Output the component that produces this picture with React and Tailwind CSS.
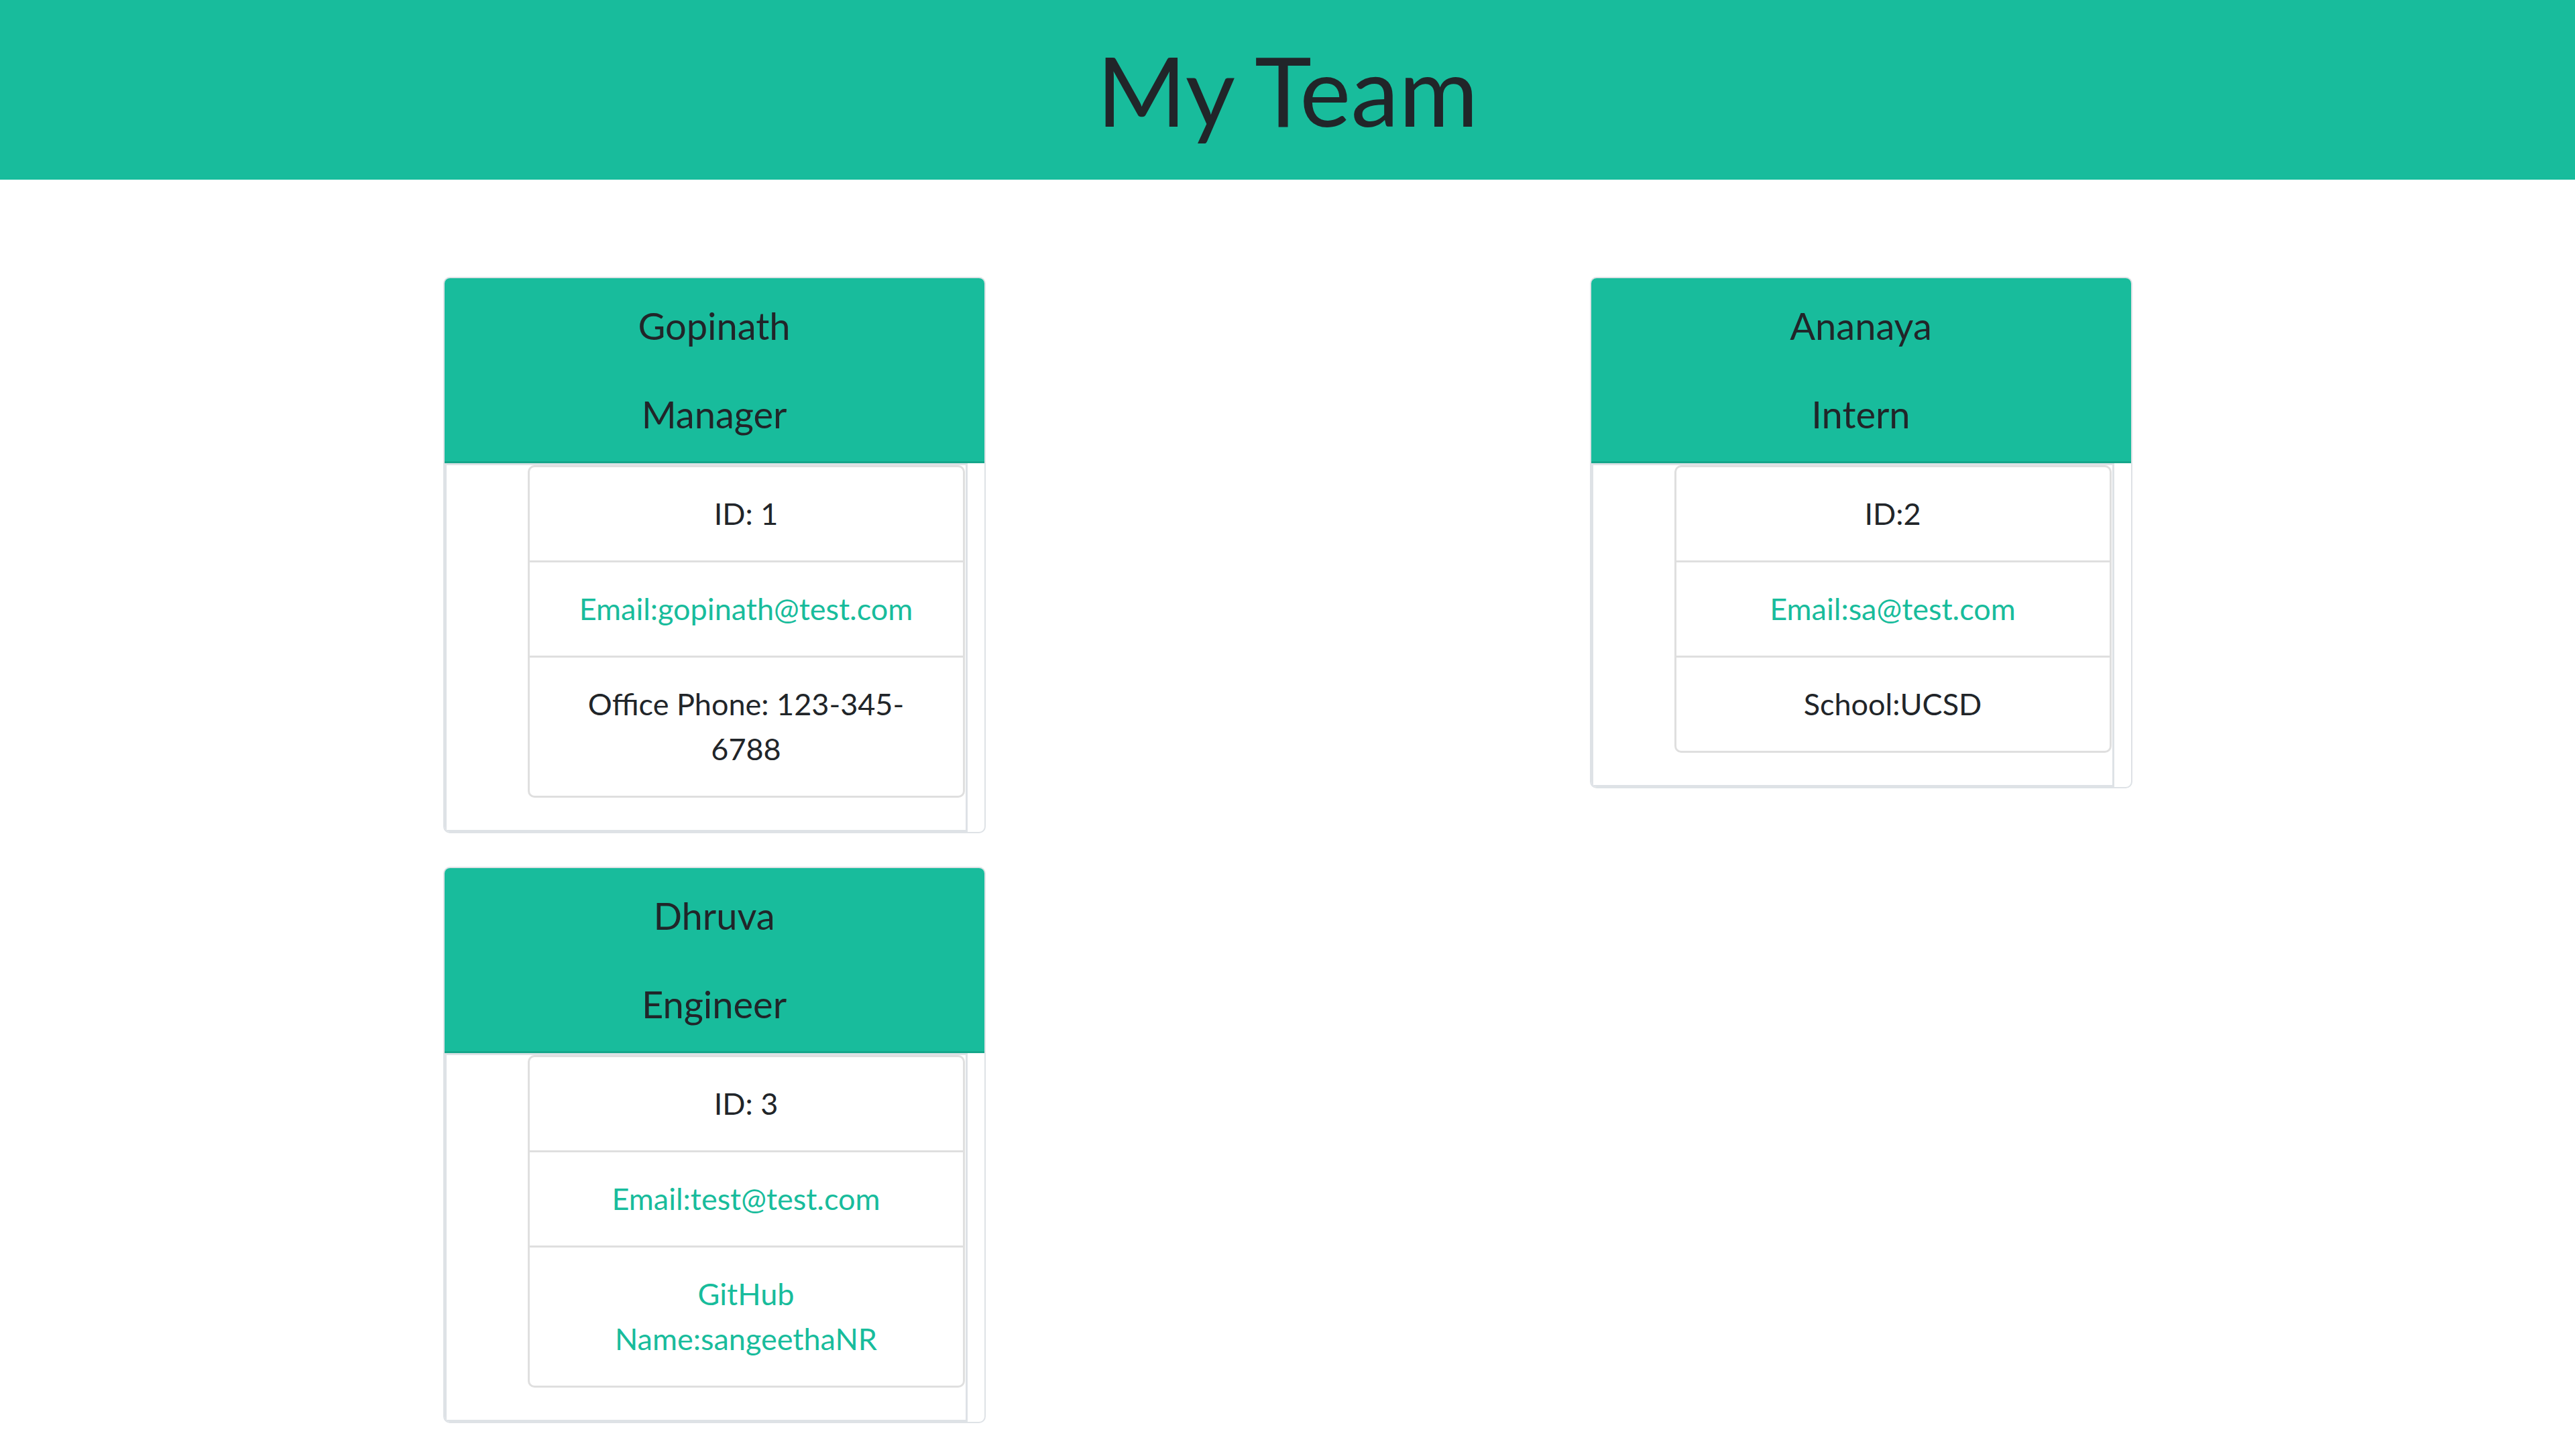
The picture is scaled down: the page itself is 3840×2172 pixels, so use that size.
const LEFT = [
  {
    name: 'Gopinath',
    role: 'Manager',
    id: 'ID: 1',
    email: 'Email:gopinath@test.com',
    extra: 'Office Phone: 123-345-6788',
    extraLink: false,
  },
  {
    name: 'Dhruva',
    role: 'Engineer',
    id: 'ID: 3',
    email: 'Email:test@test.com',
    extra: 'GitHub Name:sangeethaNR',
    extraLink: true,
  },
]

const RIGHT = [
  {
    name: 'Ananaya',
    role: 'Intern',
    id: 'ID:2',
    email: 'Email:sa@test.com',
    extra: 'School:UCSD',
    extraLink: false,
  },
]

function MemberCard({ member }) {
  return (
    <div className="w-[809px] rounded-[10px] border-2 border-[#dee2e6] overflow-hidden bg-white">
      <div className="bg-[#18bc9c] border-b-[3px] border-[#15a68a] pt-[38px] pb-[37px] flex flex-col gap-[66px] text-center text-[56px] leading-[66px] text-[#212529]">
        <h5>{member.name}</h5>
        <h5>{member.role}</h5>
      </div>
      <div className="mr-[25px] border-[3px] border-[#dee2e6] pl-[121px] pr-px pb-[48px]">
        <ul className="rounded-[10px] border-[3px] border-[#dfdfdf] divide-y-[3px] divide-[#dfdfdf] text-center text-[45px] leading-[67px]">
          <li className="px-[58px] py-[36px] text-[#212529]">{member.id}</li>
          <li className="px-[58px] py-[36px] text-[#18bc9c]">{member.email}</li>
          <li className={`px-[58px] py-[36px] ${member.extraLink ? 'text-[#18bc9c]' : 'text-[#212529]'}`}>
            {member.extra}
          </li>
        </ul>
      </div>
    </div>
  )
}

export default function App() {
  return (
    <div className="min-h-screen bg-white font-['Lato','Open_Sans',sans-serif] text-[#212529]">
      <header className="h-[268px] bg-[#18bc9c] flex items-center justify-center">
        <h1 className="text-[144px] leading-[1.2] font-normal">My Team</h1>
      </header>
      <main className="w-[3420px] mx-auto grid grid-cols-2 pt-[145px] pb-[49px]">
        <div className="flex flex-col items-center gap-[50px]">
          {LEFT.map((m) => (
            <MemberCard key={m.name} member={m} />
          ))}
        </div>
        <div className="flex flex-col items-center gap-[50px]">
          {RIGHT.map((m) => (
            <MemberCard key={m.name} member={m} />
          ))}
        </div>
      </main>
    </div>
  )
}
